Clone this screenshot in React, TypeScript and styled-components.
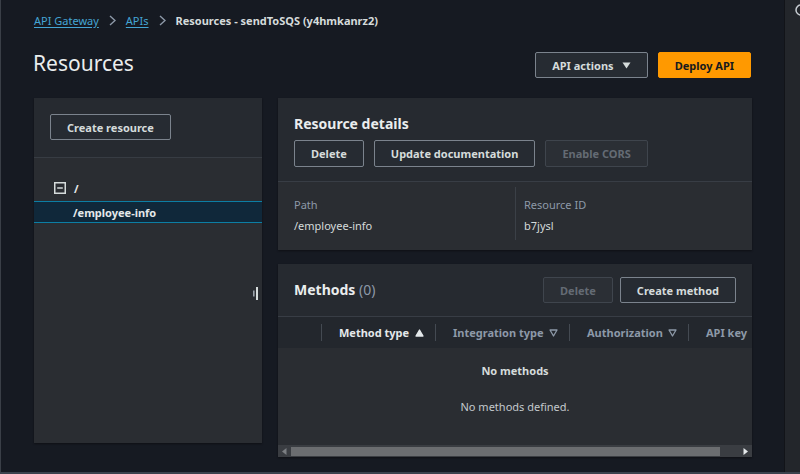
import React from "react";
import styled, { createGlobalStyle } from "styled-components";

const GlobalStyle = createGlobalStyle`
  body {
    margin: 0;
    background: #161a22;
    font-family: "Noto Sans", "Open Sans", sans-serif;
    color: #d5dbdb;
  }
  * { box-sizing: border-box; }
`;

const Shell = styled.div`
  display: flex;
  flex-direction: column;
  width: 800px;
  height: 474px;
  overflow: hidden;
`;

const Body = styled.div`
  flex: 1;
  display: flex;
  min-height: 0;
`;

const Main = styled.main`
  width: 784px;
  padding: 0 33px 0 33px;
  border-left: 1px solid #3a3f47;
`;

const SideStrip = styled.aside`
  width: 16px;
  background: #23262b;
  border-left: 1px solid #121419;
  overflow: hidden;
  padding-top: 1px;
`;

const Footer = styled.div`
  height: 2px;
  background: #3b424d;
`;

const Crumbs = styled.nav`
  height: 40px;
  display: flex;
  align-items: center;
  gap: 10px;
  font-size: 11px;
`;

const CrumbLink = styled.a`
  color: #44a5d4;
  text-decoration: underline;
  text-underline-offset: 2px;
`;

const CrumbCurrent = styled.span`
  color: #d5dbdb;
  font-weight: 700;
`;

const Header = styled.header`
  height: 50px;
  margin-bottom: 8px;
  display: flex;
  align-items: center;
  justify-content: space-between;
`;

const Title = styled.h1`
  margin: 0 0 4px -1px;
  font-size: 21px;
  font-weight: 400;
  color: #eaeded;
`;

const Actions = styled.div<{ $gap?: number }>`
  display: flex;
  gap: ${({ $gap }) => $gap ?? 10}px;
`;

const Button = styled.button<{ $primary?: boolean; $disabled?: boolean; $h?: number }>`
  height: ${({ $h }) => $h ?? 26}px;
  padding: 0 16px;
  display: inline-flex;
  align-items: center;
  gap: 8px;
  font-family: inherit;
  font-size: 11px;
  font-weight: 700;
  border-radius: 2px;
  border: 1px solid ${({ $primary, $disabled }) => ($primary ? "#ff9900" : $disabled ? "#3f454d" : "#7b838d")};
  background: ${({ $primary, $disabled }) => ($primary ? "#ff9900" : $disabled ? "#2b2f35" : "#262b32")};
  color: ${({ $primary, $disabled }) => ($primary ? "#16191f" : $disabled ? "#646b74" : "#d5dbdb")};
`;

const Columns = styled.div`
  display: grid;
  grid-template-columns: 228px 474px;
  gap: 16px;
  align-items: start;
`;

const Panel = styled.section<{ $height?: number }>`
  position: relative;
  background: #2a2d32;
  ${({ $height }) => ($height ? `height: ${$height}px;` : "")}
  box-shadow: 0 1px 2px rgba(0, 0, 0, 0.4);
`;

const PanelTop = styled.div`
  background: #262a30;
  border-bottom: 1px solid #373c43;
  padding: 16px 16px 17px;
`;

const Tree = styled.ul`
  list-style: none;
  margin: 0;
  padding: 19px 0 0;
`;

const TreeRow = styled.li<{ $selected?: boolean }>`
  height: 22px;
  display: flex;
  align-items: center;
  gap: 8px;
  padding-left: ${({ $selected }) => ($selected ? 39 : 20)}px;
  margin-bottom: 2px;
  font-size: 11px;
  font-weight: 700;
  color: #e4e8ea;
  background: ${({ $selected }) => ($selected ? "#10283a" : "transparent")};
  border-top: 1px solid ${({ $selected }) => ($selected ? "#0c7ea4" : "transparent")};
  border-bottom: 1px solid ${({ $selected }) => ($selected ? "#0c7ea4" : "transparent")};
`;

const Handle = styled.svg`
  position: absolute;
  right: 3px;
  top: 189px;
`;

const Stack = styled.div`
  display: flex;
  flex-direction: column;
  gap: 14px;
`;

const DetailsHead = styled.div`
  background: #262a30;
  border-bottom: 1px solid #383d45;
  padding: 16px 16px 14px;
`;

const PanelTitle = styled.h2`
  margin: 0;
  font-size: 14px;
  font-weight: 700;
  color: #eaeded;
  line-height: 20px;
`;

const Count = styled.span`
  font-weight: 400;
  color: #8d99a8;
`;

const ButtonRow = styled.div`
  display: flex;
  gap: 10px;
  margin-top: 6px;
`;

const KeyValues = styled.div`
  display: grid;
  grid-template-columns: 221px 221px;
  padding: 5px 16px 10px;
`;

const KV = styled.div<{ $divided?: boolean }>`
  padding: 9px 0 5px ${({ $divided }) => ($divided ? 8 : 0)}px;
  border-left: ${({ $divided }) => ($divided ? "1px solid #3b4047" : "none")};
`;

const Label = styled.div`
  font-size: 11px;
  color: #8d99a8;
  line-height: 18px;
`;

const Value = styled.div`
  font-size: 11px;
  color: #d5dbdb;
  line-height: 18px;
  margin-top: 3px;
`;

const MethodsHead = styled.div`
  background: #262a30;
  border-bottom: 1px solid #383d45;
  height: 53px;
  padding: 0 16px;
  display: flex;
  align-items: center;
  justify-content: space-between;
`;

const HeadRow = styled.div`
  height: 31px;
  background: #23272d;
  display: grid;
  grid-template-columns: 43px 114px 134px 119px 1fr;
  align-items: center;
  overflow: hidden;
  white-space: nowrap;
`;

const HeadCell = styled.div<{ $active?: boolean; $first?: boolean }>`
  height: 17px;
  display: flex;
  align-items: center;
  justify-content: space-between;
  padding: 0 11px 0 17px;
  border-left: ${({ $first }) => ($first ? "none" : "1px solid #444a52")};
  font-size: 11px;
  font-weight: 700;
  color: ${({ $active }) => ($active ? "#e4e8ea" : "#8d99a8")};
`;

const Empty = styled.div`
  height: 97px;
  display: flex;
  flex-direction: column;
  align-items: center;
  padding-top: 15px;
  gap: 21px;
  font-size: 11px;
`;

const EmptyTitle = styled.div`
  font-weight: 700;
  color: #d5dbdb;
`;

const EmptyText = styled.div`
  color: #c4c9cd;
`;

const Scrollbar = styled.div`
  height: 12px;
  background: #3a3d42;
  display: flex;
  align-items: center;
  justify-content: space-between;
  padding: 0 4px;
`;

const Thumb = styled.div`
  height: 9px;
  background: #6b6d70;
  margin-right: auto;
  margin-left: 4px;
`;

const Chevron = () => (
  <svg width="7" height="11" viewBox="0 0 7 11">
    <path d="M1 1 L6 5.5 L1 10" fill="none" stroke="#8d99a8" strokeWidth="1.4" />
  </svg>
);

const Caret = ({ filled, up }: { filled?: boolean; up?: boolean }) => (
  <svg width="9" height="8" viewBox="0 0 9 8">
    <path
      d={up ? "M4.5 1 L8 7 L1 7 Z" : "M1 1 L8 1 L4.5 7 Z"}
      fill={filled ? "#e4e8ea" : "none"}
      stroke={filled ? "#e4e8ea" : "#8d99a8"}
      strokeWidth="1.3"
      strokeLinejoin="round"
    />
  </svg>
);

const columns = [
  { name: "Method type", active: true },
  { name: "Integration type" },
  { name: "Authorization" },
  { name: "API key", noSort: true },
];

export default function App() {
  return (
    <>
      <GlobalStyle />
      <Shell>
        <Body>
          <Main>
            <Crumbs>
              <CrumbLink>API Gateway</CrumbLink>
              <Chevron />
              <CrumbLink>APIs</CrumbLink>
              <Chevron />
              <CrumbCurrent>Resources - sendToSQS (y4hmkanrz2)</CrumbCurrent>
            </Crumbs>

            <Header>
              <Title>Resources</Title>
              <Actions>
                <Button>
                  API actions
                  <svg width="9" height="7" viewBox="0 0 9 7">
                    <path d="M0.5 0.5 H8.5 L4.5 6.5 Z" fill="#d5dbdb" />
                  </svg>
                </Button>
                <Button $primary>Deploy API</Button>
              </Actions>
            </Header>

            <Columns>
              <Panel $height={345}>
                <PanelTop>
                  <Button>Create resource</Button>
                </PanelTop>
                <Tree>
                  <TreeRow>
                    <svg width="12" height="12" viewBox="0 0 12 12">
                      <rect x="0.75" y="0.75" width="10.5" height="10.5" fill="none" stroke="#d5dbdb" strokeWidth="1.5" />
                      <path d="M3.2 6 H8.8" stroke="#d5dbdb" strokeWidth="1.5" />
                    </svg>
                    /
                  </TreeRow>
                  <TreeRow $selected>/employee-info</TreeRow>
                </Tree>
                <Handle width="6" height="13" viewBox="0 0 6 13">
                  <rect x="0" y="3.5" width="1.6" height="6" fill="#9aa2ab" />
                  <rect x="3" y="0" width="2" height="13" fill="#d5dbdb" />
                </Handle>
              </Panel>

              <Stack>
                <Panel>
                  <DetailsHead>
                    <PanelTitle>Resource details</PanelTitle>
                    <ButtonRow>
                      <Button $h={27}>Delete</Button>
                      <Button $h={27}>Update documentation</Button>
                      <Button $h={27} $disabled>Enable CORS</Button>
                    </ButtonRow>
                  </DetailsHead>
                  <KeyValues>
                    <KV>
                      <Label>Path</Label>
                      <Value>/employee-info</Value>
                    </KV>
                    <KV $divided>
                      <Label>Resource ID</Label>
                      <Value>b7jysl</Value>
                    </KV>
                  </KeyValues>
                </Panel>

                <Panel>
                  <MethodsHead>
                    <PanelTitle>
                      Methods <Count>(0)</Count>
                    </PanelTitle>
                    <Actions $gap={7}>
                      <Button $disabled>Delete</Button>
                      <Button>Create method</Button>
                    </Actions>
                  </MethodsHead>
                  <HeadRow>
                    <HeadCell $first />
                    {columns.map((c) => (
                      <HeadCell key={c.name} $active={c.active}>
                        {c.name}
                        {!c.noSort && <Caret filled={c.active} up={c.active} />}
                      </HeadCell>
                    ))}
                  </HeadRow>
                  <Empty>
                    <EmptyTitle>No methods</EmptyTitle>
                    <EmptyText>No methods defined.</EmptyText>
                  </Empty>
                  <Scrollbar>
                    <svg width="5" height="7" viewBox="0 0 5 7">
                      <path d="M4.5 0 V7 L0 3.5 Z" fill="#7b7e82" />
                    </svg>
                    <Thumb style={{ width: 429 }} />
                    <svg width="5" height="7" viewBox="0 0 5 7">
                      <path d="M0.5 0 V7 L5 3.5 Z" fill="#e4e8ea" />
                    </svg>
                  </Scrollbar>
                </Panel>
              </Stack>
            </Columns>
          </Main>
          <SideStrip>
            <svg width="24" height="14" viewBox="0 0 24 14">
              <circle cx="16" cy="6" r="5" fill="none" stroke="#c8cdd2" strokeWidth="1.5" />
            </svg>
          </SideStrip>
        </Body>
        <Footer />
      </Shell>
    </>
  );
}
